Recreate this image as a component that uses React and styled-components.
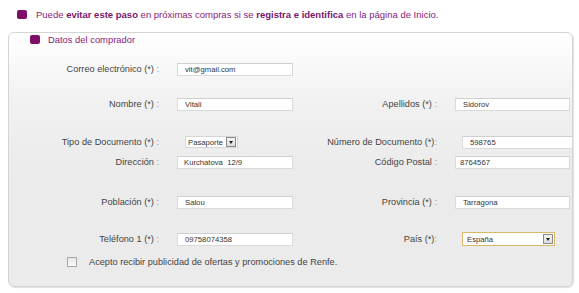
import React from "react";
import styled, { createGlobalStyle } from "styled-components";

const Global = createGlobalStyle`
  html, body { margin: 0; padding: 0; background: #fff; }
  body { font-family: "Liberation Sans", Arial, sans-serif; }
`;

const Page = styled.div`
  width: 579px;
  height: 293px;
  overflow: hidden;
  padding-top: 8px;
  box-sizing: border-box;
`;

const Notice = styled.div`
  display: flex;
  align-items: center;
  gap: 9px;
  padding-left: 17px;
  height: 13px;
  font-size: 9.5px;
  color: #86247a;
  white-space: nowrap;
  b { font-weight: bold; color: #7a166c; }
`;

const Bullet = styled.span`
  display: inline-block;
  width: 10px;
  height: 9px;
  border-radius: 2px;
  background: #7d0f68;
  flex: none;
`;

const Panel = styled.section`
  margin: 11px 0 0 8px;
  width: 565px;
  height: 255px;
  box-sizing: border-box;
  border: 1px solid #d4d4d4;
  border-radius: 6px;
  background: linear-gradient(#ffffff 0px, #f1f1f1 70px, #ebebeb 140px, #ebebeb 100%);
  box-shadow: 1px 1px 1px rgba(0, 0, 0, 0.12);
`;

const PanelHeader = styled.div`
  display: flex;
  align-items: center;
  gap: 8px;
  padding: 1px 0 0 21px;
  height: 11px;
  font-size: 9.4px;
  color: #86247a;
`;

const Row = styled.div`
  display: grid;
  grid-template-columns: 158px 138px 142px 1fr;
  align-items: center;
  height: 14px;
  margin-top: ${(p) => p.$top}px;
`;

const Label = styled.div`
  text-align: right;
  padding-right: ${(p) => (p.$pad ?? 8)}px;
  font-size: 9.2px;
  color: #444;
  white-space: nowrap;
  span { color: #9a9a9a; }
`;

const Field = styled.input`
  box-sizing: border-box;
  margin-left: ${(p) => p.$left}px;
  width: ${(p) => p.$w}px;
  height: 13px;
  padding: 0 0 0 ${(p) => p.$pad ?? 7}px;
  border: 1px solid #dadada;
  border-top-color: #d0d0d0;
  background: #fff;
  font-family: "Liberation Sans", Arial, sans-serif;
  font-size: 7.7px;
  color: #333;
  outline: none;
`;

const Select = styled.div`
  box-sizing: border-box;
  margin-left: ${(p) => p.$left}px;
  width: ${(p) => p.$w}px;
  height: ${(p) => (p.$gold ? 14 : 12)}px;
  display: flex;
  align-items: center;
  justify-content: space-between;
  padding-left: ${(p) => (p.$gold ? 4 : 2)}px;
  padding-right: 1px;
  border: 1px solid ${(p) => (p.$gold ? "#d9b86a" : "#d6d6d6")};
  background: #fff;
  font-size: 7.7px;
  color: #333;
`;

const DropButton = styled.span`
  box-sizing: border-box;
  width: 10px;
  height: 10px;
  border: 1px solid #8a8a8a;
  background: linear-gradient(#f4f4f4, #dcdcdc);
  display: flex;
  align-items: center;
  justify-content: center;
  &::after {
    content: "";
    border-left: 2.5px solid transparent;
    border-right: 2.5px solid transparent;
    border-top: 3px solid #222;
  }
`;

const CheckRow = styled.label`
  display: flex;
  align-items: center;
  gap: 12px;
  margin: 10px 0 0 58px;
  height: 12px;
  font-size: 9.2px;
  color: #444;
  white-space: nowrap;
`;

const Box = styled.span`
  box-sizing: border-box;
  width: 10px;
  height: 10px;
  border: 1px solid #a9a9a9;
  background: linear-gradient(#e6e6e6, #fbfbfb);
  flex: none;
`;

const L = ({ text, colon = " :", pad }) => (
  <Label $pad={pad}>
    {text}
    <span>{colon}</span>
  </Label>
);

export default function App() {
  return (
    <Page>
      <Global />
      <Notice>
        <Bullet />
        <div>
          Puede <b>evitar este paso</b> en próximas compras si se <b>registra e identifica</b> en la página de Inicio.
        </div>
      </Notice>
      <Panel>
        <PanelHeader>
          <Bullet />
          Datos del comprador
        </PanelHeader>

        <Row $top={17}>
          <L text="Correo electrónico (*)" />
          <Field readOnly value="vit@gmail.com" $left={10} $w={116} />
          <div />
          <div />
        </Row>

        <Row $top={21}>
          <L text="Nombre (*)" />
          <Field readOnly value="Vitali" $left={10} $w={116} />
          <L text="Apellidos (*)" pad={10} />
          <Field readOnly value="Sidorov" $left={8} $w={115} />
        </Row>

        <Row $top={24}>
          <L text="Tipo de Documento (*)" />
          <Select $left={18} $w={53}>
            Pasaporte
            <DropButton />
          </Select>
          <L text="Número de Documento (*)" colon=":" pad={10} />
          <Field readOnly value="598765" $left={15} $w={111} />
        </Row>

        <Row $top={6}>
          <L text="Dirección" />
          <Field readOnly value="Kurchatova  12/9" $left={10} $w={116} $pad={6} />
          <L text="Código Postal" pad={10} />
          <Field readOnly value="8764567" $left={8} $w={115} $pad={4} />
        </Row>

        <Row $top={26}>
          <L text="Población (*)" />
          <Field readOnly value="Salou" $left={10} $w={116} />
          <L text="Provincia (*)" pad={10} />
          <Field readOnly value="Tarragona" $left={8} $w={115} />
        </Row>

        <Row $top={23}>
          <L text="Teléfono 1 (*)" />
          <Field readOnly value="09758074358" $left={10} $w={116} />
          <L text="País (*)" colon=":" pad={10} />
          <Select $left={15} $w={93} $gold>
            España
            <DropButton />
          </Select>
        </Row>

        <CheckRow>
          <Box />
          Acepto recibir publicidad de ofertas y promociones de Renfe.
        </CheckRow>
      </Panel>
    </Page>
  );
}
